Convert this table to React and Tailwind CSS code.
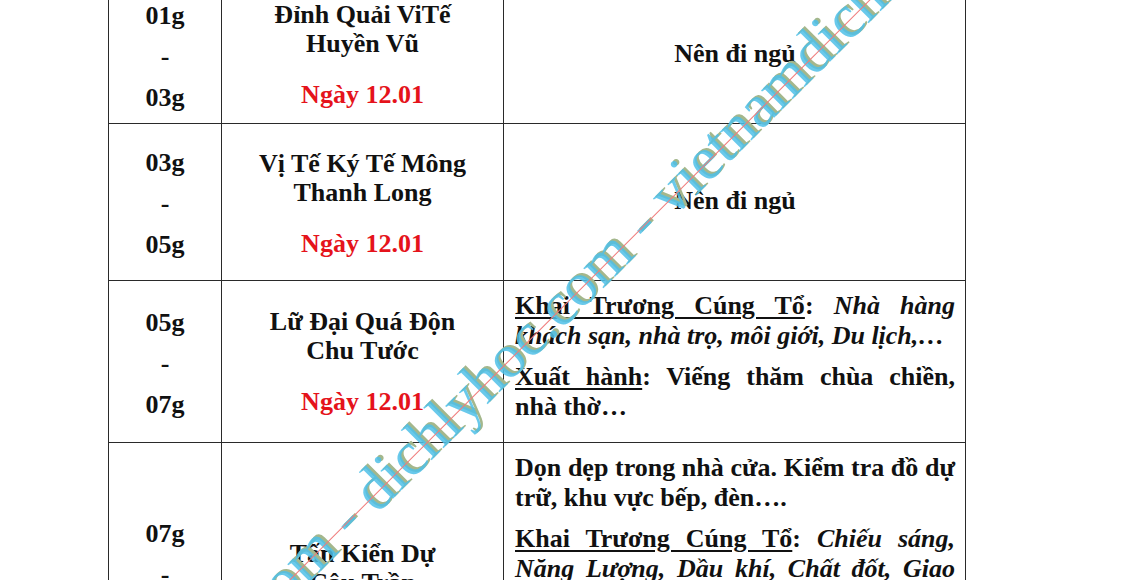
const ROWS = [
  {
    height: 'h-[147px]',
    from: '01g',
    to: '03g',
    star: ['Đỉnh Quải ViTế', 'Huyền Vũ'],
    padTime: 'pt-[24px]',
    padStar: 'pt-[23px]',
    padNote: 'pt-[62px]',
    note: 'sleep',
  },
  {
    height: 'h-[157px]',
    from: '03g',
    to: '05g',
    star: ['Vị Tế Ký Tế Mông', 'Thanh Long'],
    padTime: 'pt-[24px]',
    padStar: 'pt-[25px]',
    padNote: 'pt-[62px]',
    note: 'sleep',
  },
  {
    height: 'h-[162px]',
    from: '05g',
    to: '07g',
    star: ['Lữ Đại Quá Độn', 'Chu Tước'],
    padTime: 'pt-[27px]',
    padStar: 'pt-[26px]',
    padNote: 'pt-[10px]',
    note: 'open',
  },
  {
    height: 'h-[300px]',
    from: '07g',
    to: '09g',
    star: ['Tấn Kiển Dự', 'Câu Trần'],
    padTime: 'pt-[76px]',
    padStar: 'pt-[96px]',
    padNote: 'pt-[10px]',
    note: 'clean',
  },
];

const WATERMARK = 'vietnamdichly.com - dichlyhoc.com - vietnamdichly.com';

function Label({ children }) {
  return <span className="underline decoration-2 underline-offset-[3px]">{children}</span>;
}

function Note({ kind }) {
  if (kind === 'sleep') {
    return <p className="text-center">Nên đi ngủ</p>;
  }
  if (kind === 'open') {
    return (
      <div className="text-justify">
        <p>
          <Label>Khai Trương Cúng Tổ</Label>: <i>Nhà hàng khách sạn, nhà trọ, môi giới, Du lịch,…</i>
        </p>
        <p className="mt-[11px]">
          <Label>Xuất hành</Label>: Viếng thăm chùa chiền, nhà thờ…
        </p>
      </div>
    );
  }
  return (
    <div className="text-justify">
      <p>Dọn dẹp trong nhà cửa. Kiểm tra đồ dự trữ, khu vực bếp, đèn….</p>
      <p className="mt-[11px]">
        <Label>Khai Trương Cúng Tổ</Label>: <i>Chiếu sáng, Năng Lượng, Dầu khí, Chất đốt, Giao thông, Vận tải,…</i>
      </p>
    </div>
  );
}

export default function App() {
  return (
    <div className="relative w-[1130px] h-[580px] overflow-hidden bg-white font-['Liberation_Serif',serif] font-bold text-[26px] leading-[30px] text-[#111]">
      {/* Table */}
      <div className="ml-[108px] mt-[-24px] w-[858px] grid grid-cols-[113px_282px_462px] border-l border-t border-[#2a2a2a]">
        {ROWS.map((row) => (
          <div key={row.from} className="contents">
            <div className={`${row.height} ${row.padTime} border-r border-b border-[#2a2a2a] flex flex-col items-center`}>
              <p>{row.from}</p>
              <p className="mt-[11px]">-</p>
              <p className="mt-[11px]">{row.to}</p>
            </div>
            <div className={`${row.height} ${row.padStar} border-r border-b border-[#2a2a2a] flex flex-col items-center text-center`}>
              <p className="leading-[29px]">
                {row.star[0]}
                <br />
                {row.star[1]}
              </p>
              <p className="mt-[22px] text-[#e5131b]">Ngày 12.01</p>
            </div>
            <div className={`${row.height} ${row.padNote} border-r border-b border-[#2a2a2a] pl-[11px] pr-[10px]`}>
              <Note kind={row.note} />
            </div>
          </div>
        ))}
      </div>

      {/* Diagonal watermark */}
      <div className="pointer-events-none absolute left-[492px] top-[370px] -translate-x-1/2 -translate-y-1/2 -rotate-45">
        <div className="relative whitespace-nowrap font-['Liberation_Serif',serif] font-normal text-[62px] leading-[62px]">
          <span className="block translate-x-[3px] text-[#a4b78c]">{WATERMARK}</span>
          <span className="absolute left-0 top-0 block text-[#4fc0e8]/85">{WATERMARK}</span>
          <div className="absolute left-0 right-0 top-[36px] h-px bg-[#ef7b7b]" />
        </div>
      </div>
    </div>
  );
}
